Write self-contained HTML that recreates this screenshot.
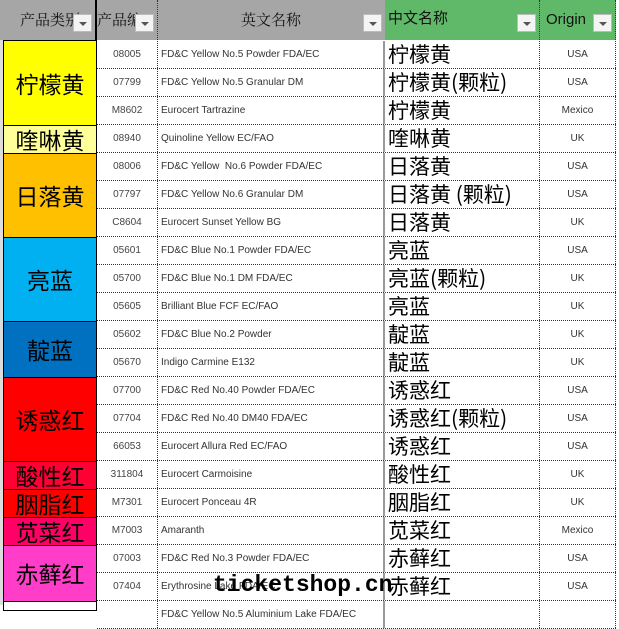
<!DOCTYPE html><html><head><meta charset="utf-8"><style>
body{margin:0;width:619px;height:605px;overflow:hidden;background:#fff;font-family:"Liberation Sans","Noto Sans CJK SC",sans-serif;position:relative}
.h{position:absolute;top:0;height:40px;line-height:40px;font-size:15px;color:#111;box-sizing:border-box;overflow:hidden;white-space:nowrap}
.gr{background:#a6a6a6;font-family:"Noto Serif CJK SC",serif}
.gn{background:#60b968;font-family:"Noto Sans CJK SC",sans-serif}
.dd{position:absolute;right:3px;top:14px;width:19px;height:18px;background:#f4f4f4;border:1px solid #bbb;box-sizing:border-box}
.dd:after{content:"";position:absolute;left:5px;top:7px;border-left:4px solid transparent;border-right:4px solid transparent;border-top:4px solid #555}
.r{position:absolute;left:97px;height:28px;width:519px;display:flex;box-sizing:border-box;border-bottom:1px dotted #333}
.r div{height:27px;line-height:27px;overflow:hidden;white-space:nowrap;box-sizing:border-box;font-size:10px;color:#333}
.c{width:61px;text-align:center;border-right:1px dotted #333;color:#444!important}
.e{width:227px;padding-left:3px;border-right:2px solid #999}
.z{width:155px;padding-left:3px;font-size:21px!important;color:#000!important;font-family:"Noto Sans CJK SC",sans-serif;border-right:1px dotted #333}
.z{line-height:27px!important}
.o{width:76px;text-align:center;border-right:1px dotted #333}
.k{position:absolute;left:3px;width:94px;box-sizing:border-box;border:1.5px solid #000;display:flex;align-items:center;justify-content:center;font-size:23px;color:#000;font-family:"Noto Sans CJK SC",sans-serif;line-height:1;overflow:hidden}
.wm{position:absolute;left:213px;top:571px;font-family:"Liberation Mono",monospace;font-weight:bold;font-size:23px;line-height:28px;color:#000}
</style></head><body>
<div style="position:absolute;left:0;top:0;width:3px;height:605px;background:#ddd"></div>
<div class="h gr" style="left:0;width:97px;padding-left:20px;border-right:2px solid #000">产品类别<span class="dd"></span></div>
<div class="h gr" style="left:97px;width:61px;border-right:1px dotted #333">产品编<span class="dd"></span></div>
<div class="h gr" style="left:158px;width:227px;padding-left:83px">英文名称<span class="dd"></span></div>
<div class="h gn" style="left:385px;width:155px;padding-left:3px;border-right:1px dotted #333;line-height:36px">中文名称<span class="dd"></span></div>
<div class="h gn" style="left:540px;width:76px;padding-left:6px;border-right:1px dotted #333;font-family:'Liberation Sans',sans-serif">Origin<span class="dd"></span></div>

<div class="r" style="top:41px"><div class="c">08005</div><div class="e">FD&amp;C Yellow No.5 Powder FDA/EC</div><div class="z">柠檬黄</div><div class="o">USA</div></div>
<div class="r" style="top:69px"><div class="c">07799</div><div class="e">FD&amp;C Yellow No.5 Granular DM</div><div class="z">柠檬黄(颗粒)</div><div class="o">USA</div></div>
<div class="r" style="top:97px"><div class="c">M8602</div><div class="e">Eurocert Tartrazine</div><div class="z">柠檬黄</div><div class="o">Mexico</div></div>
<div class="r" style="top:125px"><div class="c">08940</div><div class="e">Quinoline Yellow EC/FAO</div><div class="z">喹啉黄</div><div class="o">UK</div></div>
<div class="r" style="top:153px"><div class="c">08006</div><div class="e">FD&amp;C Yellow &nbsp;No.6 Powder FDA/EC</div><div class="z">日落黄</div><div class="o">USA</div></div>
<div class="r" style="top:181px"><div class="c">07797</div><div class="e">FD&amp;C Yellow No.6 Granular DM</div><div class="z">日落黄 (颗粒)</div><div class="o">USA</div></div>
<div class="r" style="top:209px"><div class="c">C8604</div><div class="e">Eurocert Sunset Yellow BG</div><div class="z">日落黄</div><div class="o">UK</div></div>
<div class="r" style="top:237px"><div class="c">05601</div><div class="e">FD&amp;C Blue No.1 Powder FDA/EC</div><div class="z">亮蓝</div><div class="o">USA</div></div>
<div class="r" style="top:265px"><div class="c">05700</div><div class="e">FD&amp;C Blue No.1 DM FDA/EC</div><div class="z">亮蓝(颗粒)</div><div class="o">UK</div></div>
<div class="r" style="top:293px"><div class="c">05605</div><div class="e">Brilliant Blue FCF EC/FAO</div><div class="z">亮蓝</div><div class="o">UK</div></div>
<div class="r" style="top:321px"><div class="c">05602</div><div class="e">FD&amp;C Blue No.2 Powder</div><div class="z">靛蓝</div><div class="o">UK</div></div>
<div class="r" style="top:349px"><div class="c">05670</div><div class="e">Indigo Carmine E132</div><div class="z">靛蓝</div><div class="o">UK</div></div>
<div class="r" style="top:377px"><div class="c">07700</div><div class="e">FD&amp;C Red No.40 Powder FDA/EC</div><div class="z">诱惑红</div><div class="o">USA</div></div>
<div class="r" style="top:405px"><div class="c">07704</div><div class="e">FD&amp;C Red No.40 DM40 FDA/EC</div><div class="z">诱惑红(颗粒)</div><div class="o">USA</div></div>
<div class="r" style="top:433px"><div class="c">66053</div><div class="e">Eurocert Allura Red EC/FAO</div><div class="z">诱惑红</div><div class="o">USA</div></div>
<div class="r" style="top:461px"><div class="c">311804</div><div class="e">Eurocert Carmoisine</div><div class="z">酸性红</div><div class="o">UK</div></div>
<div class="r" style="top:489px"><div class="c">M7301</div><div class="e">Eurocert Ponceau 4R</div><div class="z">胭脂红</div><div class="o">UK</div></div>
<div class="r" style="top:517px"><div class="c">M7003</div><div class="e">Amaranth</div><div class="z">苋菜红</div><div class="o">Mexico</div></div>
<div class="r" style="top:545px"><div class="c">07003</div><div class="e">FD&amp;C Red No.3 Powder FDA/EC</div><div class="z">赤藓红</div><div class="o">USA</div></div>
<div class="r" style="top:573px"><div class="c">07404</div><div class="e">Erythrosine Lake FDA/EC</div><div class="z">赤藓红</div><div class="o">USA</div></div>
<div class="r" style="top:601px"><div class="c"></div><div class="e">FD&amp;C Yellow No.5 Aluminium Lake FDA/EC</div><div class="z"></div><div class="o"></div></div>

<div class="k" style="top:40px;height:86px;background:#ffff00">柠檬黄</div>
<div class="k" style="top:125px;height:29px;background:#ffff99">喹啉黄</div>
<div class="k" style="top:153px;height:85px;background:#ffc000">日落黄</div>
<div class="k" style="top:237px;height:85px;background:#00b0f0">亮蓝</div>
<div class="k" style="top:321px;height:57px;background:#0070c0">靛蓝</div>
<div class="k" style="top:377px;height:85px;background:#ff0000">诱惑红</div>
<div class="k" style="top:461px;height:29px;background:#ff0033">酸性红</div>
<div class="k" style="top:489px;height:29px;background:#ff0000">胭脂红</div>
<div class="k" style="top:517px;height:29px;background:#ff0066">苋菜红</div>
<div class="k" style="top:545px;height:57px;background:#ff3dc8">赤藓红</div>
<div class="k" style="top:601px;height:10px;background:#fff"></div>
<div class="wm">ticketshop.cn</div>
</body></html>
